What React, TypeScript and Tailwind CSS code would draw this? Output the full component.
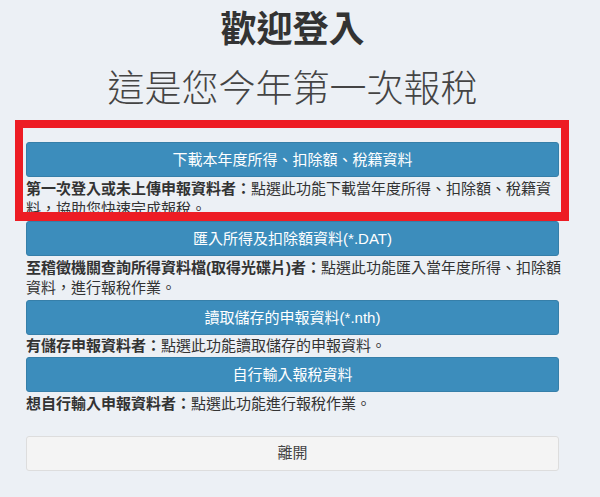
import React from "react";

const font = { fontFamily: '"Liberation Sans", "Noto Sans CJK TC", sans-serif' };

function Btn({ children, className = "" }: { children: React.ReactNode; className?: string }) {
  return (
    <button
      className={`w-full h-[35px] rounded-[3px] border border-[#367fa9] bg-[#3c8dbc] text-white text-[15px] leading-[20px] flex items-center justify-center ${className}`}
    >
      {children}
    </button>
  );
}

export default function App() {
  return (
    <div className="relative min-h-[497px] w-[600px] bg-[#ecf0f5] text-[#333]" style={font}>
      <div className="pl-[26px] pt-[12px]">
        <div className="w-[533px] flex flex-col">
          <h1 className="text-center text-[36px] leading-[36px] font-bold text-[#333]">歡迎登入</h1>
          <h2 className="mt-[23px] text-center text-[37px] leading-[37px] font-extralight text-[#444]">這是您今年第一次報稅</h2>

          <Btn className="mt-[34px]">下載本年度所得、扣除額、稅籍資料</Btn>
          <p className="mt-[2px] text-[15px] leading-[20px] whitespace-nowrap">
            <span className="font-bold">第一次登入或未上傳申報資料者：</span>點選此功能下載當年度所得、扣除額、稅籍資
            <br />
            料，協助您快速完成報稅。
          </p>

          <Btn className="mt-[2px]">匯入所得及扣除額資料(*.DAT)</Btn>
          <p className="mt-[2px] text-[15px] leading-[20px] whitespace-nowrap">
            <span className="font-bold">至稽徵機關查詢所得資料檔(取得光碟片)者：</span>點選此功能匯入當年度所得、扣除額
            <br />
            資料，進行報稅作業。
          </p>

          <Btn className="mt-[2px]">讀取儲存的申報資料(*.nth)</Btn>
          <p className="mt-[1px] text-[15px] leading-[20px] whitespace-nowrap">
            <span className="font-bold">有儲存申報資料者：</span>點選此功能讀取儲存的申報資料。
          </p>

          <Btn className="mt-[1px]">自行輸入報稅資料</Btn>
          <p className="mt-[2px] text-[15px] leading-[20px] whitespace-nowrap">
            <span className="font-bold">想自行輸入申報資料者：</span>點選此功能進行報稅作業。
          </p>

          <button className="mt-[22px] w-full h-[35px] rounded-[3px] border border-[#dddddd] bg-[#f4f4f4] text-[#444] text-[15px] flex items-center justify-center">
            離開
          </button>
        </div>
      </div>

      <div className="absolute left-[15px] top-[120px] w-[554px] h-[101px] border-[8px] border-b-[9px] border-[#ed1c24] pointer-events-none" />
    </div>
  );
}
